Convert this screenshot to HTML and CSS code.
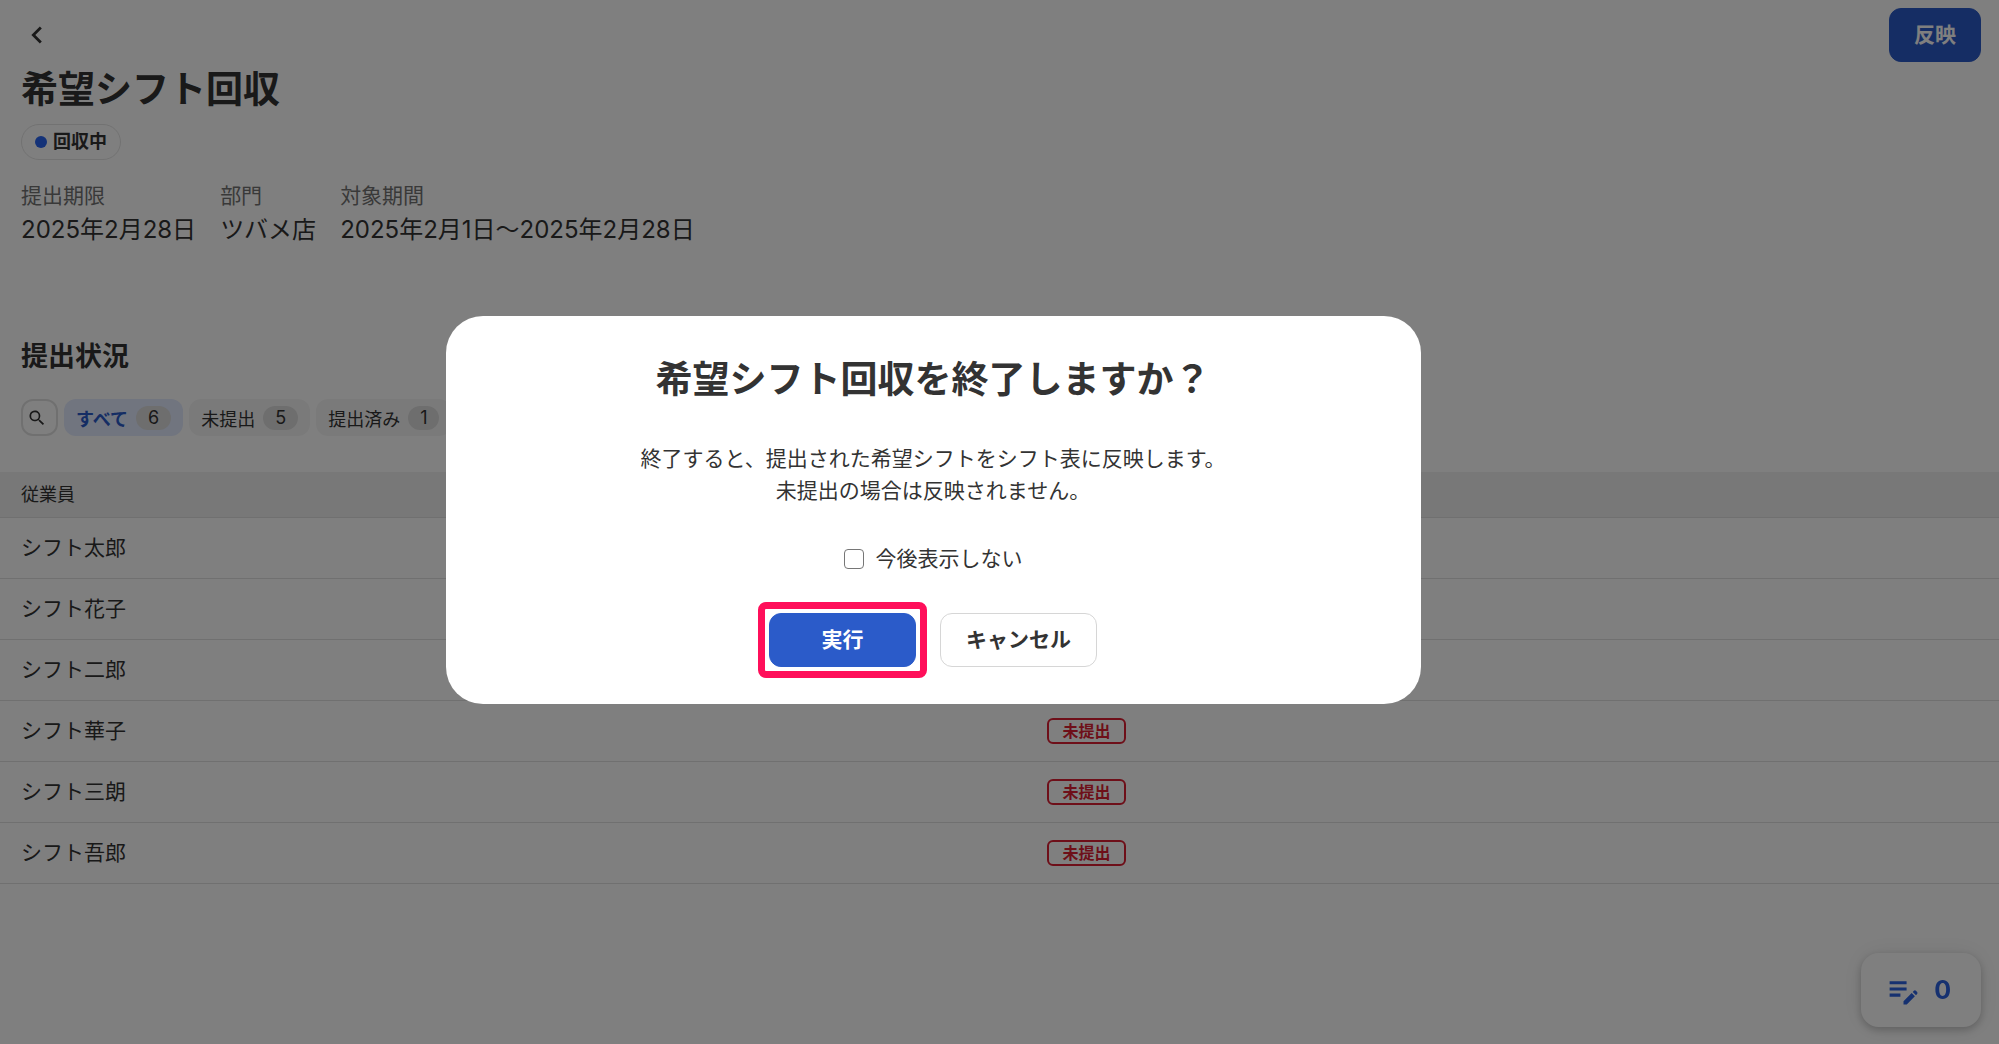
FILE: index.html
```
<!DOCTYPE html>
<html lang="ja">
<head>
    <meta charset="UTF-8">
    <meta name="viewport" content="width=device-width, initial-scale=1.0">
    <title>希望シフト回収</title>
    <link rel="stylesheet" href="styles.css">
</head>
<body>
    <header class="topbar">
        <a class="back" href="#" aria-label="戻る">
            <svg width="34" height="34" viewBox="0 0 24 24"><path d="M15.4 7.4 14 6l-6 6 6 6 1.4-1.4-4.6-4.6z"/></svg>
        </a>
        <button type="button" class="btn btn-primary">反映</button>
    </header>

    <main>
        <section class="summary">
            <h1>希望シフト回収</h1>
            <span class="state"><span class="dot"></span>回収中</span>
            <dl class="info">
                <div>
                    <dt>提出期限</dt>
                    <dd>2025年2月28日</dd>
                </div>
                <div>
                    <dt>部門</dt>
                    <dd>ツバメ店</dd>
                </div>
                <div>
                    <dt>対象期間</dt>
                    <dd>2025年2月1日〜2025年2月28日</dd>
                </div>
            </dl>
        </section>

        <section class="status">
            <h2>提出状況</h2>
            <div class="filters">
                <button type="button" class="search" aria-label="検索">
                    <svg width="20" height="20" viewBox="0 0 24 24"><path d="M15.5 14h-.8l-.3-.3A6.5 6.5 0 1 0 13.700 14.400l.3.3v.8l5 5 1.500-1.500zm-6 0a4.500 4.500 0 1 1 0-9 4.500 4.500 0 0 1 0 9z"/></svg>
                </button>
                <button type="button" class="chip active">すべて<span class="count">6</span></button>
                <button type="button" class="chip">未提出<span class="count">5</span></button>
                <button type="button" class="chip">提出済み<span class="count">1</span></button>
            </div>
        </section>

        <table class="members">
            <thead>
                <tr><th>従業員</th><th></th></tr>
            </thead>
            <tbody>
                <tr><td>シフト太郎</td><td></td></tr>
                <tr><td>シフト花子</td><td></td></tr>
                <tr><td>シフト二郎</td><td></td></tr>
                <tr><td>シフト華子</td><td><span class="tag">未提出</span></td></tr>
                <tr><td>シフト三朗</td><td><span class="tag">未提出</span></td></tr>
                <tr><td>シフト吾郎</td><td><span class="tag">未提出</span></td></tr>
            </tbody>
        </table>
    </main>

    <button type="button" class="memo">
        <svg width="37" height="37" viewBox="0 0 24 24"><path d="M3 10h11v2H3zm0-2h11V6H3zm0 8h7v-2H3zm15-3.100.7-.7a1 1 0 0 1 1.400 0l.7.7a1 1 0 0 1 0 1.400l-.7.7zm-.7.7L12 18.900V21h2.100l5.300-5.300z"/></svg>
        <span>0</span>
    </button>

    <div class="overlay">
        <div class="dialog" role="dialog" aria-modal="true" aria-labelledby="dialog-title">
            <h2 id="dialog-title">希望シフト回収を終了しますか？</h2>
            <p>終了すると、提出された希望シフトをシフト表に反映します。<br>未提出の場合は反映されません。</p>
            <label class="skip"><input type="checkbox">今後表示しない</label>
            <div class="actions">
                <button type="button" class="btn btn-primary run">実行</button>
                <button type="button" class="btn cancel">キャンセル</button>
            </div>
        </div>
    </div>
</body>
</html>
```
FILE: styles.css
```
* {
    box-sizing: border-box;
}

body {
    margin: 0;
    min-height: 100vh;
    background: #fff;
    color: #333;
    font-family: Inter, "Noto Sans CJK JP", sans-serif;
    font-size: 21px;
    line-height: 32px;
}

h1, h2, p, dl, dd {
    margin: 0;
}

button {
    font-family: inherit;
    color: inherit;
    cursor: pointer;
}

svg {
    display: block;
    fill: currentColor;
}

/* Top bar */
.topbar {
    display: flex;
    justify-content: space-between;
    align-items: center;
    padding: 8px 18px 0 20px;
}

.back {
    color: #333;
}

.btn {
    height: 54px;
    padding: 0 24px 4px;
    border: 1px solid #d6d6d6;
    border-radius: 12px;
    background: #fff;
    font-size: 21px;
    font-weight: 700;
}

.btn-primary {
    border-color: #2b5bc9;
    background: #2b5bc9;
    color: #fff;
}

/* Summary */
.summary {
    padding: 4px 21px 0;
}

h1 {
    font-size: 37px;
    line-height: 48px;
}

.state {
    display: inline-flex;
    align-items: center;
    gap: 6px;
    height: 36px;
    margin-top: 10px;
    padding: 0 13px;
    border: 1px solid #e4e4e4;
    border-radius: 18px;
    font-size: 18px;
    font-weight: 700;
    vertical-align: top;
}

.dot {
    width: 12px;
    height: 12px;
    border-radius: 50%;
    background: #2864f0;
}

.info {
    display: flex;
    gap: 24px;
    margin-top: 20px;
}

.info dt {
    color: #737373;
}

.info dd {
    font-size: 24px;
    line-height: 36px;
}

/* Status filters */
.status {
    padding: 89px 21px 0;
}

.status h2 {
    font-size: 27px;
    line-height: 40px;
}

.filters {
    display: flex;
    gap: 6px;
    margin-top: 22px;
}

.search {
    display: flex;
    align-items: center;
    justify-content: center;
    width: 37px;
    height: 37px;
    padding: 0 6px 0 0;
    border: 2px solid #e1e1e1;
    border-radius: 12px;
    background: #fff;
}

.chip {
    display: flex;
    align-items: center;
    gap: 8px;
    height: 37px;
    padding: 0 12px;
    border: 0;
    border-radius: 12px;
    background: #f5f5f5;
    font-size: 18px;
}

.chip.active {
    background: #e2eaff;
    color: #2b5bc9;
    font-weight: 700;
}

.count {
    padding: 0 12px;
    border-radius: 12px;
    background: #dcdcdc;
    color: #333;
    font-weight: 400;
    line-height: 24px;
}

/* Members table */
.members {
    width: 100%;
    margin-top: 36px;
    border-spacing: 0;
    table-layout: fixed;
}

.members th,
.members td {
    padding: 0 21px;
    border-bottom: 1px solid #e1e1e1;
    text-align: left;
}

.members th {
    height: 46px;
    background: #f0f0f0;
    font-size: 18px;
    font-weight: 400;
}

.members th:first-child {
    width: 51%;
}

.members td {
    height: 61px;
}

.members td + td {
    padding-left: 28px;
}

.tag {
    display: block;
    width: max-content;
    padding: 0 13px;
    border: 2px solid #dc1e32;
    border-radius: 6px;
    color: #dc1e32;
    font-size: 16px;
    font-weight: 700;
    line-height: 22px;
}

/* Floating memo button */
.memo {
    position: fixed;
    right: 18px;
    bottom: 17px;
    display: flex;
    align-items: center;
    gap: 12px;
    height: 74px;
    padding: 0 30px 0 24px;
    border: 0;
    border-radius: 18px;
    background: #fff;
    box-shadow: 0 3px 8px rgba(0, 0, 0, 0.22), 0 0 24px rgba(0, 0, 0, 0.08);
    color: #2c62e0;
    font-size: 25px;
    font-weight: 700;
}

/* Confirm dialog */
.overlay {
    position: fixed;
    inset: 0;
    display: flex;
    align-items: center;
    justify-content: center;
    padding: 0 133px 25px 0;
    background: rgba(0, 0, 0, 0.5);
}

.dialog {
    width: 975px;
    max-width: 100%;
    padding: 37px;
    border-radius: 37px;
    background: #fff;
    text-align: center;
}

.dialog h2 {
    font-size: 37px;
    line-height: 54px;
}

.dialog p {
    margin-top: 36px;
}

.skip {
    display: flex;
    align-items: center;
    justify-content: center;
    gap: 12px;
    margin-top: 36px;
}

.skip input {
    appearance: none;
    width: 20px;
    height: 20px;
    margin: 0;
    border: 1px solid #767676;
    border-radius: 4px;
    background: #fff;
}

.actions {
    display: flex;
    justify-content: center;
    gap: 24px;
    margin-top: 38px;
}

.cancel {
    padding: 0 25px 4px;
}

.run {
    position: relative;
    min-width: 147px;
}

.run::after {
    content: "";
    position: absolute;
    inset: -12px;
    border: 7px solid #ff0f5a;
    border-radius: 8px;
}
```
